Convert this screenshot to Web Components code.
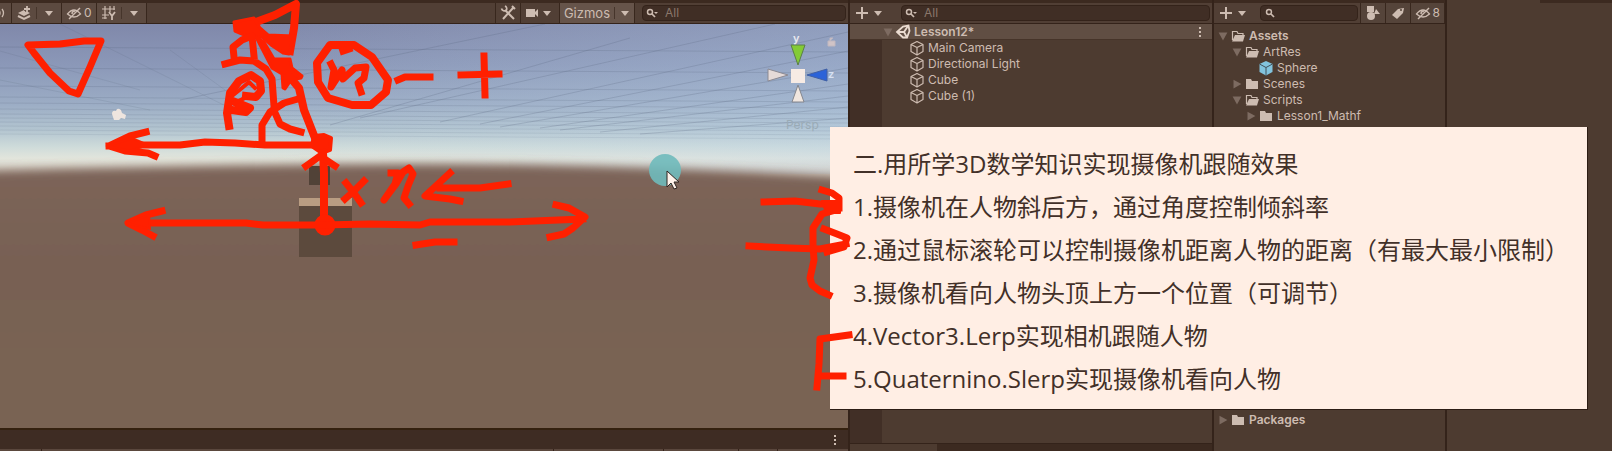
<!DOCTYPE html>
<html lang="zh-CN">
<head>
<meta charset="utf-8">
<title>Lesson12</title>
<style>
  html, body { margin: 0; height: 100%; }
  body { overflow: hidden; background: #4d3b30; color: #cdbcb1; font: 12px/16px Inter, "Noto Sans", sans-serif; }
</style>
</head>
<body>
<editor-app></editor-app>
<script>
const define = (name, html, setup) => {
  const tpl = document.createElement('template');
  tpl.innerHTML = html;
  customElements.define(name, class extends HTMLElement {
    constructor() {
      super();
      this.attachShadow({ mode: 'open' }).append(tpl.content.cloneNode(true));
    }
    connectedCallback() { if (setup) setup(this, this.shadowRoot); }
  });
};

const ICONS = {
  caret: '<path d="M4 6h8l-4 5z" fill="currentColor"/>',
  open: '<path d="M3 4h10L8 13z" fill="#7d6b61"/>',
  closed: '<path d="M4 3v10l9-5z" fill="#7d6b61"/>',
  plus: '<path d="M8 2v12M2 8h12" stroke="currentColor" stroke-width="2"/>',
  sound: '<path d="M8 5q2 3 0 6M11 4q3 4 0 8" fill="none" stroke="currentColor" stroke-width="1.3"/>',
  layers: '<path d="M2 8l6-3 6 3-6 3z" fill="currentColor"/><path d="M2 11l6 3 6-3" fill="none" stroke="currentColor" stroke-width="2"/><path d="M11 1v6M8 4h6" stroke="#5c4a40" stroke-width="3.500"/><path d="M11 1v6M8 4h6" stroke="currentColor" stroke-width="1.8"/>',
  eye: '<path d="M1.500 9Q8 1 14.500 9Q8 15 1.500 9z" fill="none" stroke="currentColor" stroke-width="1.3"/><path d="M6 9q0-3 3-3" fill="none" stroke="currentColor" stroke-width="1.4"/><path d="M3 14L14 3" stroke="currentColor" stroke-width="1.5"/>',
  grid: '<path d="M4 1v13M9 1v6M1 4h13M1 10h7M13 1v4M1 13h5" stroke="currentColor" stroke-width="1.2"/><path d="M8 7l3 4v4M14 7l-3 4" fill="none" stroke="currentColor" stroke-width="1.800"/>',
  tools: '<path d="M3 14L13 3M12 1l3 3M5 5l9 9" stroke="currentColor" stroke-width="2"/><path d="M1.500 3.500a3 3 0 0 0 5 1.500 3 3 0 0 0-1.500-4" fill="none" stroke="currentColor" stroke-width="1.700"/>',
  camera: '<rect x="1" y="4" width="9" height="8" fill="currentColor"/><path d="M10 7l3-3v8l-3-3z" fill="currentColor"/>',
  search: '<circle cx="6" cy="7" r="2.500" fill="none" stroke="currentColor" stroke-width="1.500"/><path d="M8 9l3 3" stroke="currentColor" stroke-width="1.700"/>',
  searchmenu: '<circle cx="5" cy="7" r="2.500" fill="none" stroke="currentColor" stroke-width="1.500"/><path d="M7 9l3 3" stroke="currentColor" stroke-width="1.700"/><path d="M9 7h4l-2 2z" fill="currentColor"/>',
  unity: '<path d="M2 8L8 2.500 13.500 1.500 14.500 7 12 13.500 8 13.500z" fill="none" stroke="#eadbd0" stroke-width="1.800"/><path d="M3 8h6l4-6M9 8l3 5.500" fill="none" stroke="#eadbd0" stroke-width="1.800"/>',
  cube: '<path d="M8 1.500l6 3v7l-6 3.500-6-3.500v-7zM2 4.500l6 3 6-3M8 7.500V15" fill="none" stroke="currentColor" stroke-width="1.200" stroke-linejoin="round"/>',
  prefab: '<path d="M8 1l6.500 3v8L8 15.500 1.500 12V4z" fill="#82c3dd"/><path d="M1.500 4L8 7.500 14.500 4M8 7.500v8" fill="none" stroke="#41505a" stroke-width="1"/>',
  folder: '<path d="M2 3h5l1 2h6v8H2z" fill="currentColor"/>',
  folderopen: '<path d="M2.500 12V3.500H7l1 2h5V7" fill="none" stroke="currentColor" stroke-width="1.200"/><path d="M5 7h10l-2 6.500H2z" fill="currentColor"/>',
  shapes: '<rect x="2" y="1" width="7" height="6" fill="currentColor"/><circle cx="6" cy="11" r="4" fill="currentColor"/><path d="M9 9l2-5 4 5z" fill="currentColor"/>',
  tag: '<path d="M2 10l6-6 6-1-1 5-6 6z" fill="currentColor"/><circle cx="11" cy="5" r="1" fill="#55443a"/>',
  kebab: '<path d="M7 3h2v2H7zM7 7h2v2H7zM7 11h2v2H7z" fill="currentColor"/>'
};

const paint = (root, name) => { root.querySelector('svg').innerHTML = ICONS[name] || ''; };

define('ui-icon', `<style>:host{display:block;flex:none;width:16px;height:16px}svg{display:block;width:100%;height:100%}</style><svg viewBox="0 0 16 16" aria-hidden="true"></svg>`,
  (el, root) => paint(root, el.getAttribute('name')));

define('tool-button', `<style>
  :host{display:flex;flex:none}
  button{display:flex;align-items:center;justify-content:center;gap:2px;min-width:24px;padding:0 4px;margin:0;border:0;border-right:1px solid #38271d;background:var(--fill,#5c4a40);color:inherit;font:inherit}
  </style><button type="button"><slot></slot></button>`,
  (el, root) => root.querySelector('button').setAttribute('aria-label', el.getAttribute('label')));

define('search-box', `<style>
  :host{display:block;flex:1;min-width:0;margin:2px 2px}
  label{display:flex;align-items:center;box-sizing:border-box;height:16px;padding:0 2px;border:1px solid #34231a;border-radius:4px;background:#402e25}
  input{flex:1;width:0;min-width:0;height:14px;padding:0 4px;margin:0;border:0;outline:0;background:none;color:inherit;font:inherit}
  input::placeholder{color:#8a776b;opacity:1}
  </style><label><ui-icon></ui-icon><input type="text" aria-label="Search"></label>`,
  (el, root) => {
    const hint = el.getAttribute('hint') || '';
    root.querySelector('input').placeholder = hint;
    paint(root.querySelector('ui-icon').shadowRoot, hint ? 'searchmenu' : 'search');
  });

define('tool-bar', `<style>
  :host{display:flex;flex:none;box-sizing:border-box;height:24px;border-top:3px solid #3c2a20;border-bottom:1px solid #34231a;background:#513f35}
  </style><slot></slot>`);

define('tree-row', `<style>
  :host{display:flex;flex:none;align-items:center;height:16px;font-size:12px}
  :host([strong]){font-weight:600}
  #fold{width:14px;height:14px}
  span{margin-left:3px;white-space:nowrap}
  </style><ui-icon id="fold"></ui-icon><ui-icon id="kind"></ui-icon><span><slot></slot></span>`,
  (el, root) => {
    const fold = root.getElementById('fold');
    paint(fold.shadowRoot, el.getAttribute('fold'));
    paint(root.getElementById('kind').shadowRoot, el.getAttribute('icon'));
    fold.style.marginLeft = `calc(${el.getAttribute('level') || 0} * 14px)`;
  });

const gridLines = () => {
  let out = '';
  [50, 71, 89, 100, 106, 112, 117, 121, 125, 129, 133, 137].forEach((y, i) => {
    out += `<path d="M0 ${y - 3}L848 ${y + 2}" opacity="${0.22 - i * 0.01}"/>`;
  });
  [[545,24,180,100],[630,38,330,125],[775,24,360,118],[848,32,440,122],[848,51,480,124],[848,68,500,127],[848,84,540,128],[848,96,560,130],[848,107,600,132],[848,118,640,134]].forEach(p => {
    out += `<path d="M${p[0]} ${p[1]}L${p[2]} ${p[3]}" opacity=".24"/>`;
  });
  [[0,51,140,90],[0,80,150,110],[60,24,250,118],[170,50,225,90]].forEach(p => {
    out += `<path d="M${p[0]} ${p[1]}L${p[2]} ${p[3]}" opacity=".15"/>`;
  });
  return out;
};

define('scene-view', `<style>
  :host{display:block;flex:1;min-height:0}
  svg{display:block;width:100%;height:100%}
  text{font-family:Inter,sans-serif}
  </style>
  <svg viewBox="0 24 848 404" preserveAspectRatio="none" role="img" aria-label="Scene">
    <defs>
      <linearGradient id="sky" gradientUnits="userSpaceOnUse" x1="0" y1="24" x2="0" y2="170">
        <stop offset="0" stop-color="#8088aa"/><stop offset=".28" stop-color="#8b98b8"/><stop offset=".55" stop-color="#9cadc5"/>
        <stop offset=".72" stop-color="#b2c4d0"/><stop offset=".84" stop-color="#cedbda"/><stop offset=".92" stop-color="#e2e5dc"/><stop offset="1" stop-color="#dcd6cb"/>
      </linearGradient>
      <linearGradient id="light" x1="0" x2="1" y1="0" y2="0"><stop offset=".3" stop-color="#c8dcee" stop-opacity="0"/><stop offset="1" stop-color="#b8d3ee" stop-opacity=".28"/></linearGradient>
      <linearGradient id="earth" x1="0" x2="0" y1="0" y2="1"><stop offset="0" stop-color="#7c6459"/><stop offset=".35" stop-color="#786153"/><stop offset="1" stop-color="#7a6552"/></linearGradient>
      <filter id="haze" x="-5%" y="-10%" width="110%" height="120%"><feGaussianBlur stdDeviation="1 5"/></filter>
    </defs>
    <rect y="24" width="848" height="170" fill="url(#sky)"/>
    <rect y="24" width="848" height="150" fill="url(#light)"/>
    <g stroke="#56637c" fill="none">${gridLines()}</g>
    <path d="M-20 171Q200 165 400 164T868 178V460H-20z" fill="url(#earth)" filter="url(#haze)"/>
    <path d="M309 166h21v19h-21z" fill="#514237"/>
    <path d="M299 198h53v59h-53z" fill="#5c4a3d"/><path d="M299 198h53v8h-53z" fill="#b99d82"/>
    <path d="M112 114q0-4 4-3 1-4 5-1l1 3 4 2-1 4-4-1-2 2h-5z" fill="#eee5df"/>
    <g stroke-width="1">
      <path d="M791 45h14l-7 20z" fill="#83cb35" stroke="#5a7e48"/>
      <path d="M768 69v12l20-6z" fill="#e5dad8" stroke="#8b8992"/>
      <path d="M827 69v12l-20-6z" fill="#2b63d8" stroke="#4060a5"/>
      <path d="M798 85l6 17h-12z" fill="#f0e6df" stroke="#85878e"/>
      <path d="M791 69h14v14h-14z" fill="#f7ebe4"/>
    </g>
    <path d="M828 41h7v5h-7zM830 41v-3h3" fill="#d0c3c6" stroke="#c0b8c0"/>
    <text x="793" y="42" font-size="11" font-weight="600" fill="#e9eaf0">y</text>
    <text x="828" y="78" font-size="11" font-weight="600" fill="#d7e1f2">z</text>
    <text x="786" y="129" font-size="12" fill="#9aabb6">Persp</text>
    <circle cx="665" cy="170" r="16" fill="#6fbabb" opacity=".9"/>
    <path d="M667 171v16l4-4 3 6 3-1-3-6h5z" fill="#fff3eb" stroke="#2e2420"/>
  </svg>`);

define('scene-panel', `<style>
  :host{display:flex;flex-direction:column;min-width:0;border-right:2px solid #34231a}
  .space{flex:1}
  .search{display:flex;flex:0 1 213px;min-width:0;box-sizing:border-box;padding-left:5px}
  .pipe{width:1px;height:12px;margin:0 2px;background:#46352b}
  .gizmos{font-size:13px}
  .status{display:flex;flex:none;align-items:center;justify-content:flex-end;height:19px;padding-right:5px;border-top:2px solid #34210f;background:#3e2c23}
  .next{flex:none;display:grid;grid-template-columns:41fr 514fr 110fr 74fr 39fr 70fr;gap:1px;height:2px;background:#34231a}
  .next i{background:#5a473d}
  </style>
  <tool-bar>
    <tool-button label="Audio" style="margin-left:-13px"><ui-icon name="sound"></ui-icon></tool-button>
    <tool-button label="Effects"><ui-icon name="layers"></ui-icon><span class="pipe"></span><ui-icon name="caret"></ui-icon></tool-button>
    <tool-button label="Hidden objects"><ui-icon name="eye"></ui-icon><span>0</span></tool-button>
    <tool-button label="Grid"><ui-icon name="grid"></ui-icon><span class="pipe"></span><ui-icon name="caret"></ui-icon></tool-button>
    <div class="space"></div>
    <tool-button label="Tools" style="--fill:#513f35;border-left:1px solid #38271d"><ui-icon name="tools"></ui-icon></tool-button>
    <tool-button label="Camera" style="--fill:#513f35"><ui-icon name="camera"></ui-icon><ui-icon name="caret" style="margin-left:-4px"></ui-icon></tool-button>
    <tool-button label="Gizmos" style="--fill:#66544a"><span class="gizmos">Gizmos</span><span class="pipe"></span><ui-icon name="caret" style="margin-right:-3px;margin-left:-2px"></ui-icon></tool-button>
    <div class="search"><search-box hint="All"></search-box></div>
  </tool-bar>
  <scene-view></scene-view>
  <div class="status"><ui-icon name="kebab"></ui-icon></div>
  <div class="next"><i></i><i></i><i></i><i></i><i></i><i></i></div>`);

define('hierarchy-panel', `<style>
  :host{display:flex;flex-direction:column;min-width:0;border-right:2px solid #34231a}
  .tools{display:flex;align-items:center;flex:none;width:49px;padding-left:4px;box-sizing:border-box}
  .list{flex:1;min-height:0;background:linear-gradient(90deg,#412f26 32px,#4d3b30 32px)}
  .head{display:flex;justify-content:space-between;padding:0 4px 0 31px;background:#604e43;border-bottom:1px solid #463429;height:15px}
  .kids{padding-left:45px}
  .foot{flex:none;height:7px;border-top:1px solid #34231a;background:linear-gradient(90deg,#4d3b30 87px,#3c2a20 87px)}
  </style>
  <tool-bar><div class="tools"><ui-icon name="plus"></ui-icon><ui-icon name="caret"></ui-icon></div><search-box hint="All"></search-box></tool-bar>
  <div class="list">
    <div class="head"><tree-row strong fold="open" icon="unity">Lesson12*</tree-row><ui-icon name="kebab"></ui-icon></div>
    <div class="kids">
      <tree-row icon="cube">Main Camera</tree-row><tree-row icon="cube">Directional Light</tree-row>
      <tree-row icon="cube">Cube</tree-row><tree-row icon="cube">Cube (1)</tree-row>
    </div>
  </div>
  <div class="foot"></div>`);

define('project-panel', `<style>
  :host{display:flex;flex-direction:column;min-width:0;border-right:2px solid #34231a}
  .tools{display:flex;align-items:center;flex:none;width:44px;padding-left:4px;box-sizing:border-box}
  .tree{display:flex;flex:1;flex-direction:column;min-height:0;padding:4px 0 23px 2px}
  .last{margin-top:auto}
  </style>
  <tool-bar><div class="tools"><ui-icon name="plus"></ui-icon><ui-icon name="caret"></ui-icon></div><search-box></search-box>
    <tool-button label="Filter by type" style="border-left:1px solid #38271d;--fill:#55443a"><ui-icon name="shapes"></ui-icon></tool-button>
    <tool-button label="Filter by label" style="--fill:#55443a"><ui-icon name="tag"></ui-icon></tool-button>
    <tool-button label="Hidden packages" style="--fill:#55443a"><ui-icon name="eye"></ui-icon><span>8</span></tool-button>
  </tool-bar>
  <div class="tree">
    <tree-row strong fold="open" icon="folderopen">Assets</tree-row>
    <tree-row level="1" fold="open" icon="folderopen">ArtRes</tree-row>
    <tree-row level="2" icon="prefab">Sphere</tree-row>
    <tree-row level="1" fold="closed" icon="folder">Scenes</tree-row>
    <tree-row level="1" fold="open" icon="folderopen">Scripts</tree-row>
    <tree-row level="2" fold="closed" icon="folder">Lesson1_Mathf</tree-row>
    <tree-row class="last" strong fold="closed" icon="folder">Packages</tree-row>
  </div>`);

define('inspector-panel', `<style>
  :host{display:block;min-width:0;background:#4d3b30}
  div{height:3px;background:linear-gradient(90deg,#4d3b30 93px,#3c2a20 93px)}
  </style><div></div>`);

define('task-note', `<style>
  :host{display:block;box-sizing:border-box;padding:15px 23px 9px;background:#ffeee4;border-right:1px solid #2c1c14;border-bottom:1px solid #2c1c14;color:#423028;font:24px/43px "Open Sans","Noto Sans CJK SC",sans-serif}
  p{margin:0;white-space:nowrap}
  </style>
  <p>二.用所学3D数学知识实现摄像机跟随效果</p>
  <p>1.摄像机在人物斜后方，通过角度控制倾斜率</p>
  <p>2.通过鼠标滚轮可以控制摄像机距离人物的距离（有最大最小限制）</p>
  <p>3.摄像机看向人物头顶上方一个位置（可调节）</p>
  <p>4.Vector3.Lerp实现相机跟随人物</p>
  <p>5.Quaternino.Slerp实现摄像机看向人物</p>`);

define('ink-layer', `<style>
  :host{display:block;pointer-events:none}
  svg{display:block;width:100%;height:100%}
  </style>
  <svg viewBox="0 0 1612 451" preserveAspectRatio="xMinYMin meet" aria-hidden="true">
    <g fill="none" stroke="#ff2000" stroke-width="7" stroke-linejoin="round" stroke-linecap="square">
      <path d="M28 45L60 44 84 41 101 41 90 67 78 94 69 91 50 73 34 53z"/>
      <path d="M240 24L256 22 275 15 296 4 294 28 290 51" stroke-width="8"/>
      <path d="M234 22l20-4 6 10 8 7 26 1-5 18-6-1-12-8-9-8-10 1-10-4-7-3z" fill="#ff2000" stroke-width="3"/>
      <path d="M256 37L264 42 274 59 290 59 292 68 302 76 301 78 291 80 285 89 283 88 282 74 272 68z" fill="#ff2000" stroke-width="3"/>
      <path d="M289 76L299 88 304 110 315 138" stroke-width="8"/>
      <path d="M225 64L240 60 254 61 266 69 272 79 274 106M234 57L233 47 242 40 252 36 254 56"/>
      <path d="M229 126L227 113 230 93 239 81 251 75 260 81 261 91 256 97 246 96M230 100L240 104 250 108 246 112 232 110" stroke-width="8"/>
      <path d="M232 96L242 88 249 82 255 88M234 103L245 98" stroke-width="4"/>
      <path d="M262 142L262 125 270 112 284 103 298 99M276 115L280 124 290 129 301 132"/>
      <path d="M314 136l10-1 7 3-1 12-8 3-10-7z" fill="#ff2000" stroke-width="4"/>
      <path d="M146 132L130 136 109 146 125 151 148 153 155 156M109 146L140 145 180 145 205 142 235 143 265 145 318 145"/>
      <path d="M108 146l24-8 16 7-18 6z" fill="#ff2000" stroke-width="2"/>
      <path d="M330 45L354 45 372 57 388 80 386 92 371 105 352 105 328 98 318 82 317 63z" stroke-width="8"/>
      <path d="M331 64L334 70 331 87 342 70 343 79 355 68 366 67 364 78 358 83 361 92M343 51L349 49"/>
      <path d="M398 80L405 77 430 77M461 75L499 74M484 56L485 95"/>
      <path d="M323 153L324 173V223" stroke-width="8"/><path d="M306 166L320 156 335 166"/>
      <circle cx="325" cy="225" r="7" fill="#ff2000"/>
      <path d="M130 223H246L263 225 320 225 370 224 420 225 430 222 510 222 583 219M162 211L146 215 128 223 142 230 153 236M556 205L569 208 585 217 573 228 564 234 550 237"/>
      <path d="M127 223l22-8 1 14z" fill="#ff2000" stroke-width="2"/>
      <path d="M346 183L354 193 361 203M364 181L354 191 345 199M391 173L398 173 395 184 384 200 396 184 403 172 409 168 413 174 408 186 404 198 409 204M508 184L480 188 440 188M450 173L438 184 425 196 450 199 460 201M416 245L435 242 454 242"/>
      <path d="M764 202L795 201 820 204 838 204M822 190L832 193 839 198V208M836 210L822 214 813 228V245L814 260 810 278 812 285 820 291 829 295"/>
      <path d="M822 201h18v12h-14z" fill="#ff2000" stroke-width="2"/>
      <path d="M749 246L790 248 820 249 846 244M824 229L837 234 847 238 844 247 827 252M849 335L820 339 819 364 817 387M821 376H843"/>
    </g>
  </svg>`);

define('editor-app', `<style>
  :host{display:grid;position:relative;height:100vh;grid-template-columns:minmax(0,850fr) minmax(0,364fr) minmax(0,233fr) minmax(0,165fr);background:#4d3b30;overflow:hidden}
  task-note{position:absolute;left:830px;top:127px;width:758px}
  ink-layer{position:absolute;inset:0}
  </style>
  <scene-panel></scene-panel><hierarchy-panel></hierarchy-panel><project-panel></project-panel><inspector-panel></inspector-panel>
  <task-note></task-note><ink-layer></ink-layer>`);
</script>
</body>
</html>
